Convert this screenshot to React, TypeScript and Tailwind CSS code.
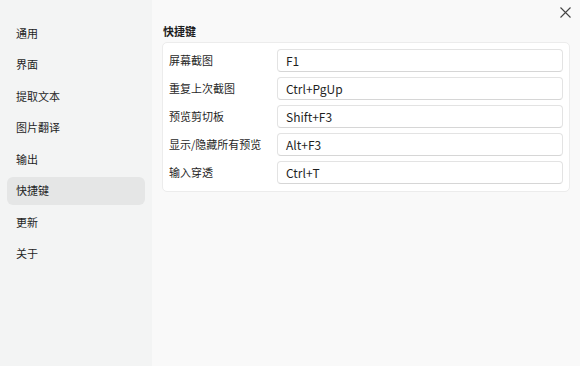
import React from "react";

const navItems = ["通用", "界面", "提取文本", "图片翻译", "输出", "快捷键", "更新", "关于"];

const shortcuts = [
  { label: "屏幕截图", value: "F1" },
  { label: "重复上次截图", value: "Ctrl+PgUp" },
  { label: "预览剪切板", value: "Shift+F3" },
  { label: "显示/隐藏所有预览", value: "Alt+F3" },
  { label: "输入穿透", value: "Ctrl+T" },
];

export default function App() {
  return (
    <div
      className="flex h-[366px] w-[580px] overflow-hidden bg-[#f9f9f9] text-[11px] text-[#1f1f1f]"
      style={{ fontFamily: '"Segoe UI", "Noto Sans CJK SC", "Noto Sans", sans-serif' }}
    >
      {/* sidebar */}
      <aside className="flex w-[152px] shrink-0 flex-col gap-[3.5px] bg-[#f3f4f4] px-[7px] pt-[19px]">
        {navItems.map((item) => (
          <div
            key={item}
            className={`flex h-[28px] items-center rounded-[6px] pl-[9px] ${
              item === "快捷键" ? "bg-[#e5e6e6]" : ""
            }`}
          >
            {item}
          </div>
        ))}
      </aside>

      {/* content */}
      <main className="relative flex-1 pl-[10px] pr-[10px] pt-[22px]">
        <button className="absolute right-[9px] top-[6px] flex h-[12px] w-[12px] items-center justify-center text-[#444]">
          <svg width="11" height="11" viewBox="0 0 11 11" fill="none" stroke="currentColor" strokeWidth="1.1">
            <path d="M0.5 0.5L10.5 10.5M10.5 0.5L0.5 10.5" />
          </svg>
        </button>
        <h2 className="pl-[1px] text-[11px] font-bold leading-[18px]">快捷键</h2>
        <div className="mt-[2px] flex flex-col gap-[5px] rounded-[5px] border border-[#ececec] bg-white px-[6px] pb-[7px] pt-[6px]">
          {shortcuts.map((s) => (
            <div key={s.label} className="flex h-[23px] items-center">
              <span className="w-[108px] shrink-0">{s.label}</span>
              <div className="flex h-[23px] flex-1 items-center rounded-[4px] border border-[#e3e3e3] border-b-[#d6d6d6] bg-white pl-[8px] text-[12px]">
                {s.value}
              </div>
            </div>
          ))}
        </div>
      </main>
    </div>
  );
}
